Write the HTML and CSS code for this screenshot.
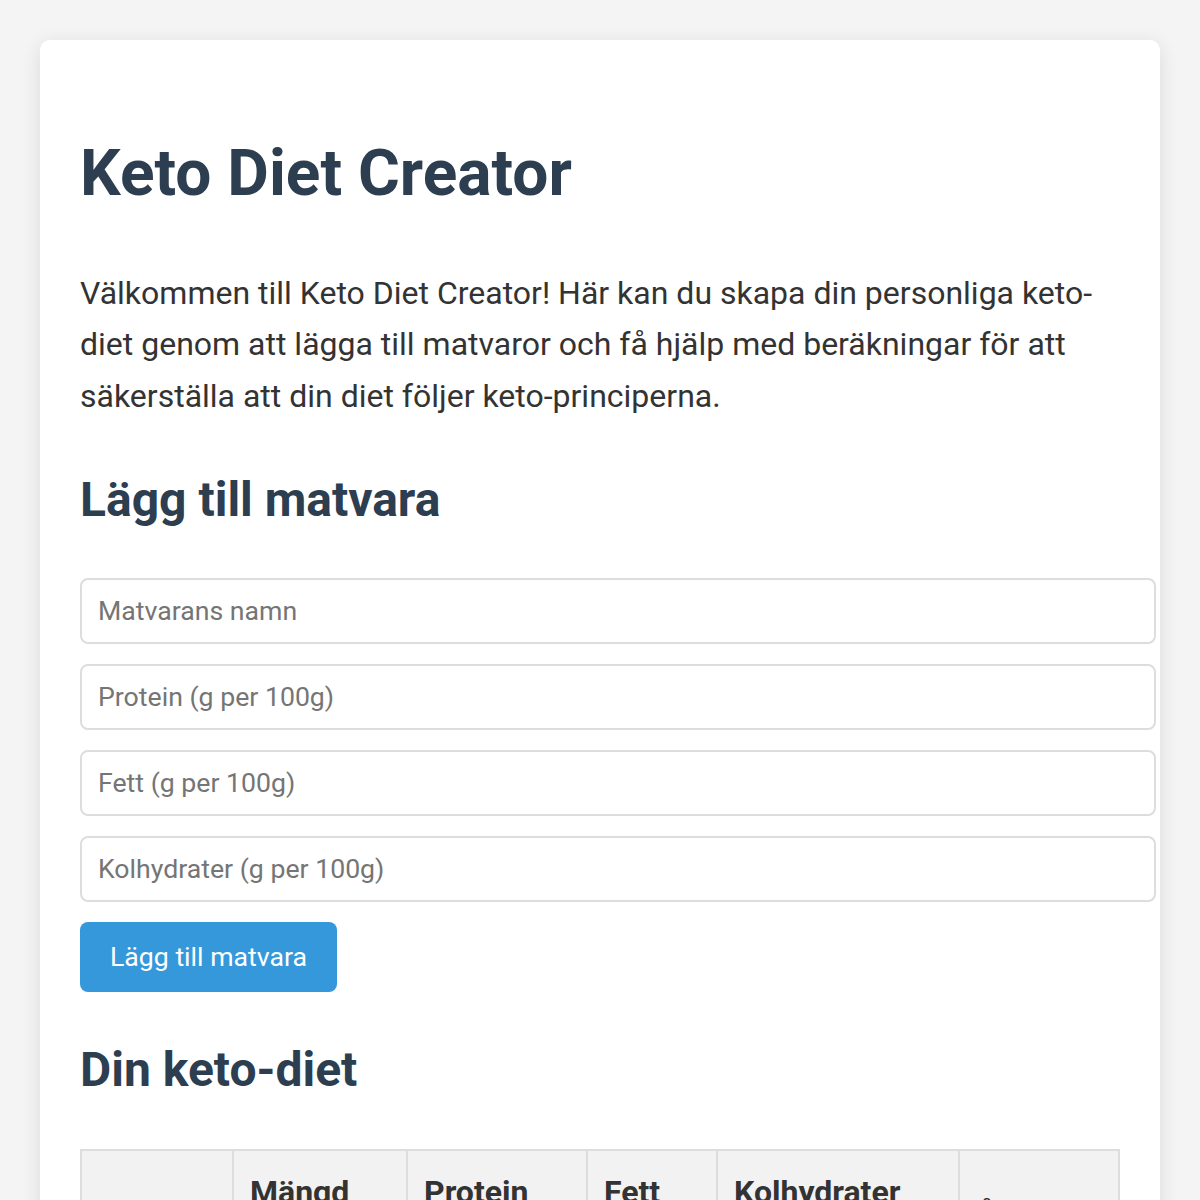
FILE: index.html
```html
<!DOCTYPE html>
<html lang="sv">
<head>
    <meta charset="UTF-8">
    <meta name="viewport" content="width=device-width, initial-scale=1.0">
    <title>Keto Diet Creator</title>
    <link rel="stylesheet" href="styles.css">
</head>
<body>
    <div class="container">
        <h1>Keto Diet Creator</h1>
        <p>Välkommen till Keto Diet Creator! Här kan du skapa din personliga keto-diet genom att lägga till matvaror och få hjälp med beräkningar för att säkerställa att din diet följer keto-principerna.</p>

        <h2>Lägg till matvara</h2>
        <form id="foodForm">
            <input type="text" id="foodName" class="food-input" placeholder="Matvarans namn">
            <input type="number" id="protein" class="food-input" placeholder="Protein (g per 100g)">
            <input type="number" id="fat" class="food-input" placeholder="Fett (g per 100g)">
            <input type="number" id="carbs" class="food-input" placeholder="Kolhydrater (g per 100g)">
            <button type="submit" class="button">Lägg till matvara</button>
        </form>

        <h2>Din keto-diet</h2>
        <table class="diet-table">
            <colgroup>
                <col class="col-name">
                <col class="col-amount">
                <col class="col-protein">
                <col class="col-fat">
                <col class="col-carbs">
                <col class="col-action">
            </colgroup>
            <thead>
                <tr>
                    <th>Matvara</th>
                    <th>Mängd (g)</th>
                    <th>Protein (g)</th>
                    <th>Fett (g)</th>
                    <th>Kolhydrater (g)</th>
                    <th>Åtgärd</th>
                </tr>
            </thead>
            <tbody id="dietList"></tbody>
        </table>
    </div>
</body>
</html>
```

FILE: styles.css
```css
body {
    font-family: Roboto, "Liberation Sans", sans-serif;
    font-size: 32px;
    line-height: 1.6;
    color: #333;
    margin: 0;
    padding: 40px;
    background-color: #f4f4f4;
}
.container {
    background-color: white;
    border-radius: 10px;
    box-shadow: 0 4px 20px rgba(0, 0, 0, 0.1);
    padding: 40px;
}
h1, h2 {
    color: #2c3e50;
}
h1 {
    font-size: 64px;
    margin: 0.67em 0;
}
h2 {
    font-size: 48px;
    margin: 0.83em 0;
}
p {
    margin: 1em 0;
}
.food-input {
    display: block;
    width: 100%;
    padding: 16px;
    margin-bottom: 20px;
    border: 2px solid #ddd;
    border-radius: 8px;
    font-family: Roboto, "Liberation Sans", sans-serif;
    font-size: 26.67px;
    line-height: 30px;
    color: #333;
}
.food-input::placeholder {
    color: #757575;
}
.button {
    background-color: #3498db;
    color: white;
    border: none;
    padding: 20px 30px;
    border-radius: 8px;
    font-family: Roboto, "Liberation Sans", sans-serif;
    font-size: 26.67px;
    line-height: 30px;
    cursor: pointer;
}
.button:hover {
    background-color: #2980b9;
}
.diet-table {
    width: 100%;
    border-collapse: collapse;
    table-layout: fixed;
}
.col-name { width: 152px; }
.col-amount { width: 174px; }
.col-protein { width: 180px; }
.col-fat { width: 130px; }
.col-carbs { width: 242px; }
.col-action { width: 160px; }
.diet-table th,
.diet-table td {
    border: 2px solid #ddd;
    padding: 16px;
    text-align: left;
}
.diet-table th {
    background-color: #f2f2f2;
}
```
